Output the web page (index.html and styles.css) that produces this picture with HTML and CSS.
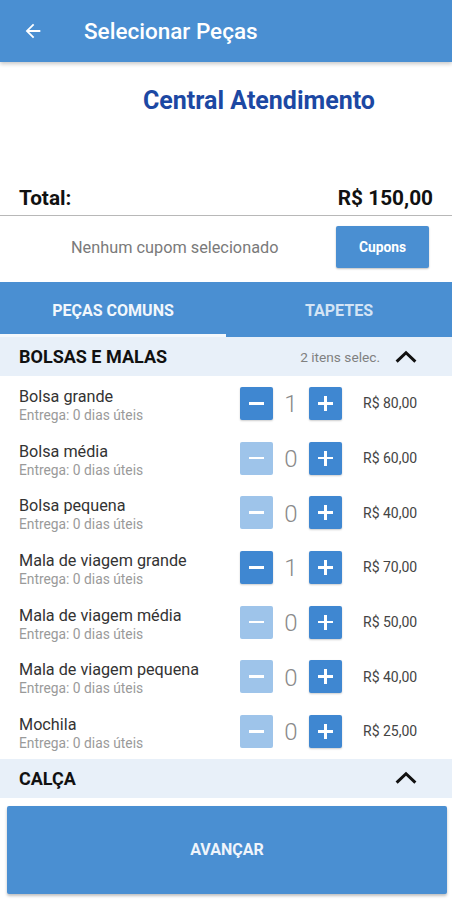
FILE: index.html
```html
<!DOCTYPE html>
<html lang="pt-BR">
<head>
<meta charset="utf-8">
<link rel="stylesheet" href="styles.css">
</head>
<body>
<div class="app">
  <header class="topbar">
    <svg class="back" viewBox="0 0 24 24" width="22" height="22"><path d="M20 11H7.83l5.59-5.59L12 4l-8 8 8 8 1.41-1.41L7.83 13H20v-2z" fill="#fff"/></svg>
    <h1 class="title">Selecionar Peças</h1>
  </header>

  <div class="brand">Central Atendimento</div>

  <div class="total">
    <span>Total:</span>
    <span>R$ 150,00</span>
  </div>

  <div class="coupon">
    <span class="coupon-text">Nenhum cupom selecionado</span>
    <button class="coupon-btn">Cupons</button>
  </div>

  <nav class="tabs">
    <div class="tab active">PEÇAS COMUNS</div>
    <div class="tab">TAPETES</div>
  </nav>

  <div class="section">
    <span class="section-title">BOLSAS E MALAS</span>
    <span class="section-count">2 itens selec.</span>
    <svg class="chev" viewBox="0 0 32 32"><path d="M6 21 16 11.5 26 21" fill="none" stroke="#111" stroke-width="3.2"/></svg>
  </div>

  <div class="items">
    <div class="item">
      <div class="info"><div class="name">Bolsa grande</div><div class="sub">Entrega: 0 dias úteis</div></div>
      <div class="ctrl"><span class="btn minus"><i class="h"></i></span><span class="qty">1</span><span class="btn"><i class="h"></i><i class="v"></i></span></div>
      <div class="price">R$ 80,00</div>
    </div>
    <div class="item">
      <div class="info"><div class="name">Bolsa média</div><div class="sub">Entrega: 0 dias úteis</div></div>
      <div class="ctrl"><span class="btn minus off"><i class="h"></i></span><span class="qty">0</span><span class="btn"><i class="h"></i><i class="v"></i></span></div>
      <div class="price">R$ 60,00</div>
    </div>
    <div class="item">
      <div class="info"><div class="name">Bolsa pequena</div><div class="sub">Entrega: 0 dias úteis</div></div>
      <div class="ctrl"><span class="btn minus off"><i class="h"></i></span><span class="qty">0</span><span class="btn"><i class="h"></i><i class="v"></i></span></div>
      <div class="price">R$ 40,00</div>
    </div>
    <div class="item">
      <div class="info"><div class="name">Mala de viagem grande</div><div class="sub">Entrega: 0 dias úteis</div></div>
      <div class="ctrl"><span class="btn minus"><i class="h"></i></span><span class="qty">1</span><span class="btn"><i class="h"></i><i class="v"></i></span></div>
      <div class="price">R$ 70,00</div>
    </div>
    <div class="item">
      <div class="info"><div class="name">Mala de viagem média</div><div class="sub">Entrega: 0 dias úteis</div></div>
      <div class="ctrl"><span class="btn minus off"><i class="h"></i></span><span class="qty">0</span><span class="btn"><i class="h"></i><i class="v"></i></span></div>
      <div class="price">R$ 50,00</div>
    </div>
    <div class="item">
      <div class="info"><div class="name">Mala de viagem pequena</div><div class="sub">Entrega: 0 dias úteis</div></div>
      <div class="ctrl"><span class="btn minus off"><i class="h"></i></span><span class="qty">0</span><span class="btn"><i class="h"></i><i class="v"></i></span></div>
      <div class="price">R$ 40,00</div>
    </div>
    <div class="item">
      <div class="info"><div class="name">Mochila</div><div class="sub">Entrega: 0 dias úteis</div></div>
      <div class="ctrl"><span class="btn minus off"><i class="h"></i></span><span class="qty">0</span><span class="btn"><i class="h"></i><i class="v"></i></span></div>
      <div class="price">R$ 25,00</div>
    </div>
  </div>

  <div class="section">
    <span class="section-title">CALÇA</span>
    <span class="section-count"></span>
    <svg class="chev" viewBox="0 0 32 32"><path d="M6 21 16 11.5 26 21" fill="none" stroke="#111" stroke-width="3.2"/></svg>
  </div>

  <div class="footer">
    <button class="next">AVANÇAR</button>
  </div>
</div>
</body>
</html>
```

FILE: styles.css
```css
* { box-sizing: border-box; margin: 0; padding: 0; }
html, body { background: #fff; }
body { font-family: Roboto, "Noto Sans", Arial, sans-serif; width: 452px; height: 900px; overflow: hidden; }
.app { display: flex; flex-direction: column; height: 900px; }

.topbar {
  height: 62px; background: #4a8fd2; display: flex; align-items: center;
  padding-left: 22px; box-shadow: 0 2px 4px rgba(0,0,0,0.22); position: relative; z-index: 1;
}
.back { flex: none; }
.title { color: #fff; font-size: 22.5px; font-weight: 500; margin-left: 40px; }

.brand {
  height: 118px; padding: 24px 0 0 143px;
  color: #1c48a3; font-size: 25px; font-weight: 700; line-height: 30px;
}

.total {
  display: flex; justify-content: space-between; align-items: center;
  height: 36px; padding: 0 19px; border-bottom: 1px solid #b8b8b8;
  font-size: 20.8px; font-weight: 700; color: #111;
}

.coupon {
  height: 66px; display: flex; align-items: center; justify-content: space-between;
  padding: 0 23px 4px 71px;
}
.coupon-text { color: #7a7a7a; font-size: 16.3px; }
.coupon-btn {
  width: 93px; height: 42px; border: none; border-radius: 2px;
  background: #4a8fd2; color: #fff; font-family: inherit; font-size: 13.8px; font-weight: 700;
  box-shadow: 0 1px 2px rgba(0,0,0,0.25);
}

.tabs { display: flex; height: 55px; background: #4a8fd2; }
.tab {
  flex: 1; display: flex; align-items: center; justify-content: center;
  color: #d4e4f5; font-size: 16px; font-weight: 700; padding-top: 5px;
  border-bottom: 3px solid transparent;
}
.tab.active { color: #f2f7fc; border-bottom-color: #f4f8fc; }

.section {
  height: 39px; background: #e8f0f9; display: flex; align-items: center;
  padding: 0 31px 0 19px; flex: none;
}
.section-title { font-size: 18px; font-weight: 700; color: #111; flex: 1; }
.section-count { font-size: 13.7px; color: #808080; margin-right: 11px; }
.chev { width: 30px; height: 30px; flex: none; }

.items { display: flex; flex-direction: column; }
.item { height: 54.7px; display: flex; align-items: center; padding: 0 19px; }
.info { flex: 1; padding-top: 4px; }
.name { font-size: 16.2px; color: #333; line-height: 20px; }
.sub { font-size: 13.8px; color: #9a9a9a; line-height: 17px; }
.ctrl { display: flex; align-items: center; }
.btn {
  width: 33px; height: 33px; background: #3f87d1; border-radius: 2px; position: relative;
  box-shadow: 0 1px 2px rgba(0,0,0,0.2); display: block;
}
.btn.off { background: #9ec4ea; box-shadow: none; }
.btn .h { position: absolute; left: 9px; top: 15.2px; width: 15px; height: 2.6px; background: #fff; }
.btn .v { position: absolute; left: 15.2px; top: 9px; width: 2.6px; height: 15px; background: #fff; }
.qty { width: 36px; text-align: center; font-size: 24px; color: #8a8a8a; font-weight: 300; padding-top: 2px; }
.price { width: 70px; margin-left: 21px; font-size: 14px; color: #444; white-space: nowrap; }

.footer { padding: 8px 5px 0 7px; }
.next {
  width: 100%; height: 88px; border: none; border-radius: 2px; background: #4a8fd2;
  color: #f0f5fb; font-family: inherit; font-size: 16px; font-weight: 700;
  box-shadow: 0 2px 3px rgba(0,0,0,0.25);
}
```
